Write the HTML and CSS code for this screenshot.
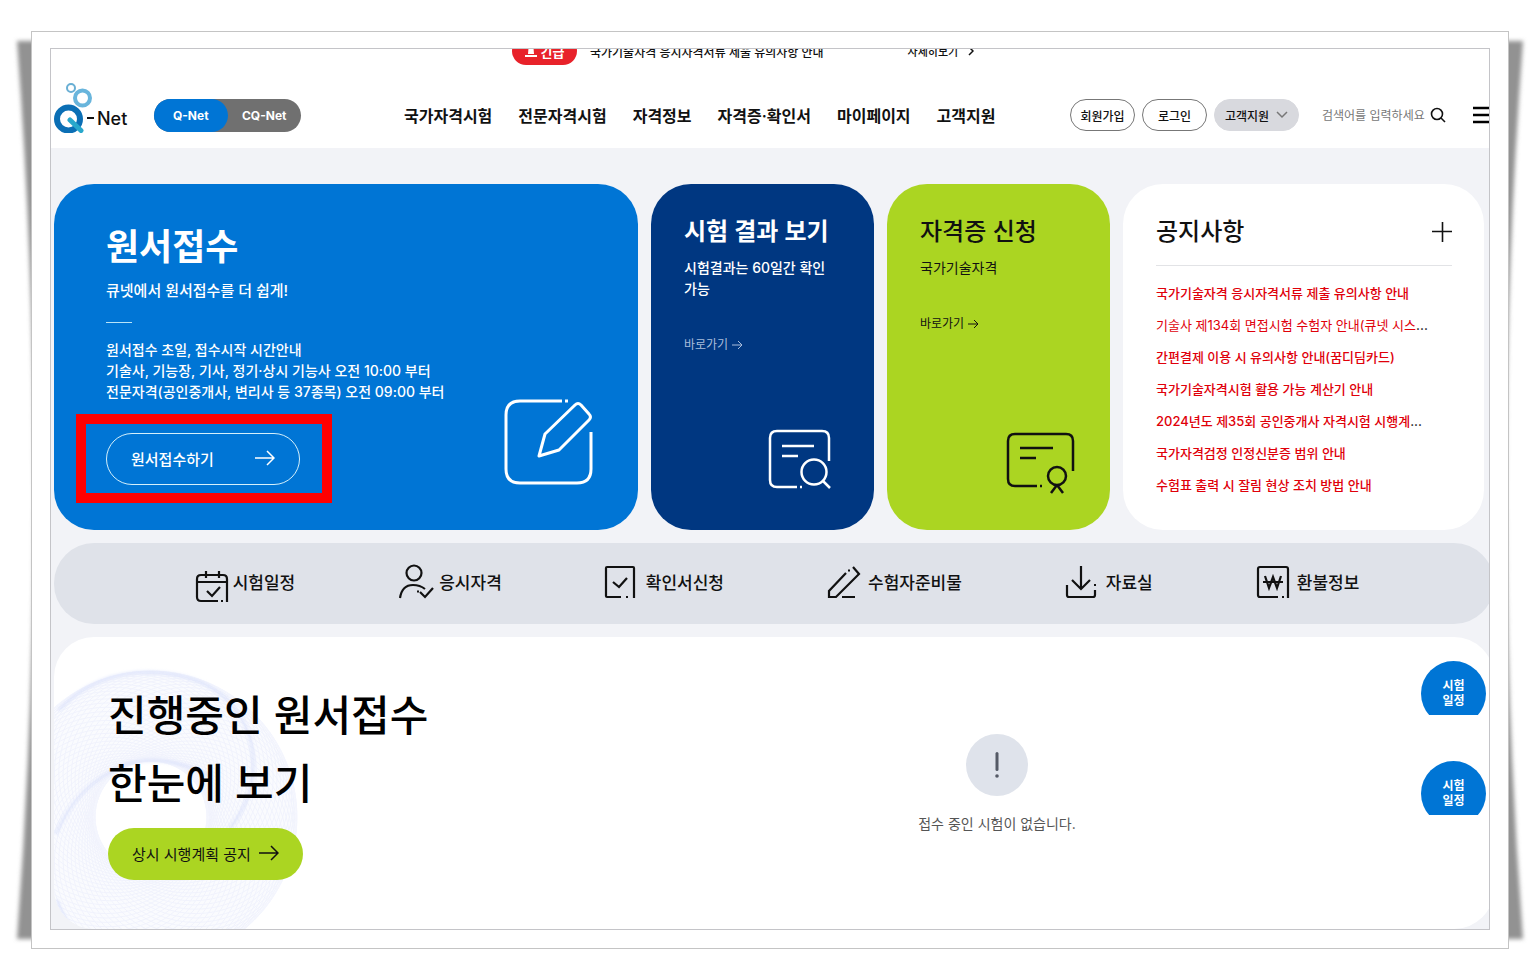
FILE: index.html
```html
<!DOCTYPE html>
<html lang="ko">
<head>
  <meta charset="UTF-8">
  <meta name="viewport" content="width=device-width, initial-scale=1.0">
  <title>Q-Net</title>
  <link rel="stylesheet" href="styles.css">
</head>
<body>
  <div class="paper">
    <!-- curled paper shadow -->
    <svg class="paper-shadow" viewBox="0 0 1540 980" preserveAspectRatio="none" aria-hidden="true">
      <defs><filter id="soft"><feGaussianBlur stdDeviation="2"/></filter></defs>
      <path d="M17 41 Q51 490 17 939 H1523 Q1489 490 1523 41 Z" fill="#929292" filter="url(#soft)"/>
    </svg>

    <div class="sheet">
      <div class="screen">
        <div class="page">
          <div class="alert-bar">
            <span class="alert-badge">
              <svg width="12" height="14" viewBox="0 0 12 14" fill="#fff"><path d="M3 10 L3.500 4 Q4 1 6 1 T8.500 4 L9 10 Z"/><rect x="0" y="11" width="12" height="2"/></svg>
              긴급
            </span>
            <span class="alert-text">국가기술자격 응시자격서류 제출 유의사항 안내</span>
            <a href="#" class="alert-more">자세히보기
              <svg width="6" height="10" viewBox="0 0 6 10" fill="none" stroke="#111" stroke-width="1.500"><path d="M1 1l4 4-4 4"/></svg>
            </a>
          </div>

          <header class="header">
            <a href="#" class="logo">
              <svg width="40" height="52" viewBox="0 0 40 52" fill="none">
                <circle cx="17" cy="7" r="4" stroke="#69afd4" stroke-width="2"/>
                <circle cx="28.500" cy="17" r="7.500" stroke="#69b5dc" stroke-width="4"/>
                <circle cx="14.500" cy="38" r="11.500" stroke="#0b6fb5" stroke-width="6"/>
                <path d="M16 39L27 49.500" stroke="#29a8cc" stroke-width="5" stroke-linecap="round"/>
                <rect x="33" y="36" width="7" height="2" fill="#111"/>
              </svg>
              <span>Net</span>
            </a>
            <div class="site-toggle">
              <button class="on">Q-Net</button>
              <button>CQ-Net</button>
            </div>
            <nav class="gnb">
              <a href="#">국가자격시험</a>
              <a href="#">전문자격시험</a>
              <a href="#">자격정보</a>
              <a href="#">자격증·확인서</a>
              <a href="#">마이페이지</a>
              <a href="#">고객지원</a>
            </nav>
            <div class="util">
              <button class="pill">회원가입</button>
              <button class="pill">로그인</button>
              <button class="pill gray">고객지원
                <svg width="12" height="8" viewBox="0 0 12 8" fill="none" stroke="#777" stroke-width="1.500"><path d="M1 1l5 5 5-5"/></svg>
              </button>
            </div>
            <form class="search">
              <input type="text" placeholder="검색어를 입력하세요" aria-label="검색어">
              <button type="button" aria-label="검색">
                <svg width="16" height="16" viewBox="0 0 16 16" fill="none" stroke="#111" stroke-width="1.600"><circle cx="7" cy="7" r="5.500"/><path d="M11 11l4 4"/></svg>
              </button>
            </form>
            <button class="menu-btn" aria-label="전체메뉴">
              <svg width="24" height="18" viewBox="0 0 24 18" fill="#000"><path d="M0 1h24v2H0zM0 8h24v2H0zM0 15h24v2H0z" stroke="#000" stroke-width="0.500"/></svg>
            </button>
          </header>

          <main class="main">
            <section class="cards">
              <article class="card apply">
                <div class="apply-text">
                  <h2>원서접수</h2>
                  <p class="lead">큐넷에서 원서접수를 더 쉽게!</p>
                  <p class="desc">원서접수 초일, 접수시작 시간안내<br>기술사, 기능장, 기사, 정기·상시 기능사 오전 10:00 부터<br>전문자격(공인중개사, 변리사 등 37종목) 오전 09:00 부터</p>
                  <a href="#" class="apply-btn">원서접수하기
                    <svg width="20" height="16" viewBox="0 0 20 16" fill="none" stroke="#fff" stroke-width="1.500"><path d="M0 8h19M12 1l7 7-7 7"/></svg>
                  </a>
                </div>
                <svg class="card-icon" width="90" height="88" viewBox="0 0 90 88" fill="none" stroke="#fff" stroke-width="3">
                  <path d="M58 2H16Q2 2 2 16V70Q2 84 16 84H73Q87 84 87 70V33"/>
                  <path d="M61 2h3"/>
                  <path d="M35 57L41 35L71 6Q74 3 77 6L85 15Q88 18 85 21L55 51Z" stroke-linejoin="round"/>
                </svg>
              </article>

              <article class="card result">
                <h3>시험 결과 보기</h3>
                <p>시험결과는 60일간 확인 가능</p>
                <a href="#" class="go">바로가기
                  <svg width="11" height="10" viewBox="0 0 11 10" fill="none" stroke="currentColor"><path d="M0 5h10M6 1l4 4-4 4"/></svg>
                </a>
                <svg class="card-icon" width="64" height="62" viewBox="0 0 64 62" fill="none" stroke="#fff" stroke-width="2.500">
                  <path d="M61 32V9Q61 2 54 2H9Q2 2 2 9V51Q2 58 9 58H29M32 58h2"/>
                  <path d="M14 17h32M14 27h16"/>
                  <circle cx="46" cy="43" r="12.500"/><path d="M55 52l7 7"/>
                </svg>
              </article>

              <article class="card license">
                <h3>자격증 신청</h3>
                <p>국가기술자격</p>
                <a href="#" class="go">바로가기
                  <svg width="11" height="10" viewBox="0 0 11 10" fill="none" stroke="currentColor"><path d="M0 5h10M6 1l4 4-4 4"/></svg>
                </a>
                <svg class="card-icon" width="70" height="62" viewBox="0 0 70 62" fill="none" stroke="#111" stroke-width="2.500">
                  <path d="M67 39V9Q67 2 60 2H9Q2 2 2 9V47Q2 54 9 54H31M34 54h2"/>
                  <path d="M14 16h33M14 26h16"/>
                  <circle cx="51" cy="44" r="9"/><path d="M51 53l-6 8M51 53l6 8"/>
                </svg>
              </article>

              <article class="card notice">
                <div class="notice-head">
                  <h3>공지사항</h3>
                  <button aria-label="더보기">
                    <svg width="20" height="20" viewBox="0 0 20 20" stroke="#111" stroke-width="1.600"><path d="M0 9.500h20M10.500 0v20"/></svg>
                  </button>
                </div>
                <ul>
                  <li><a href="#">국가기술자격 응시자격서류 제출 유의사항 안내</a></li>
                  <li><a href="#" class="thin">기술사 제134회 면접시험 수험자 안내(큐넷 시스</a>...</li>
                  <li><a href="#">간편결제 이용 시 유의사항 안내(꿈디딤카드)</a></li>
                  <li><a href="#">국가기술자격시험 활용 가능 계산기 안내</a></li>
                  <li><a href="#">2024년도 제35회 공인중개사 자격시험 시행계</a>...</li>
                  <li><a href="#">국가자격검정 인정신분증 범위 안내</a></li>
                  <li><a href="#">수험표 출력 시 잘림 현상 조치 방법 안내</a></li>
                </ul>
              </article>
            </section>

            <nav class="quick">
              <a href="#">
                <svg viewBox="0 0 32 40"><path d="M34 41V18Q34 14 30 14H8Q4 14 4 18V36Q4 40 8 40H25M28 40h2M4 21h30M13 10v7M26 10v7M14 30l5 5 8-9"/></svg>시험일정</a>
              <a href="#">
                <svg viewBox="0 0 32 40"><ellipse cx="15" cy="12" rx="7.500" ry="7.500"/><path d="M1 37Q3 24 14 24Q21 24 26 28M18 30.500h2M21 31l5 5 8-9"/></svg>응시자격</a>
              <a href="#">
                <svg viewBox="0 0 32 40"><path d="M28 37V7Q28 6 27 6H1Q0 6 0 7V35Q0 36 1 36H15M20 36h2M7 21l6 5 8-9"/></svg>확인서신청</a>
              <a href="#">
                <svg viewBox="0 0 32 40"><path d="M18 12L1 30V36H8L31 13L25 6M20 9.500h2M14 36h13"/></svg>수험자준비물</a>
              <a href="#">
                <svg viewBox="0 0 32 40"><path d="M15 5V27M6 19l9 9 9-9M1 24V34Q1 36 3 36H27Q29 36 29 34V29M28 24h2"/></svg>자료실</a>
              <a href="#">
                <svg viewBox="0 0 32 40"><path d="M31 37V8Q31 6 29 6H3Q1 6 1 8V34Q1 36 3 36H21M25 36h2M8 15l4 12 4-11 4 11 4-12M6 21h20"/></svg>환불정보</a>
            </nav>

            <section class="ongoing">
              <svg class="swirl" width="300" height="300" viewBox="0 0 300 300" fill="none" aria-hidden="true">
                <defs><filter id="haze"><feGaussianBlur stdDeviation="1.500"/></filter></defs>
                <circle cx="97" cy="151" r="101" stroke="#f5f7fe" stroke-width="86" opacity="0.500"/>
                <g id="rings"></g>
                <g stroke="#ccd6fa" stroke-width="3" opacity="0.500" filter="url(#haze)">
                  <path d="M5 44Q40 6 95 6Q175 8 196 72Q208 122 176 162"/>
                  <path d="M156 110Q110 86 70 99Q22 120 2 168"/>
                  <path d="M3 234Q8 252 22 266"/>
                </g>
              </svg>
              <div class="ongoing-left">
                <h2>진행중인 원서접수<br>한눈에 보기</h2>
                <a href="#" class="plan-btn">상시 시행계획 공지
                  <svg width="20" height="16" viewBox="0 0 20 16" fill="none" stroke="#111" stroke-width="1.500"><path d="M0 8h19M12 1l7 7-7 7"/></svg>
                </a>
              </div>
              <div class="empty">
                <span class="empty-icon">
                  <svg width="6" height="28" viewBox="0 0 6 28" fill="#555a66"><rect x="1.500" y="1" width="3" height="19" rx="1.500"/><circle cx="3" cy="25" r="1.800"/></svg>
                </span>
                <p>접수 중인 시험이 없습니다.</p>
              </div>
            </section>
          </main>
        </div>

        <aside class="floating">
          <div class="float-clip"><a href="#" class="float-btn">시험<br>일정</a></div>
          <div class="float-clip"><a href="#" class="float-btn">시험<br>일정</a></div>
        </aside>
      </div>
    </div>
  </div>

  <script>
    // fine line pattern behind the title: circles turned around one centre
    const rings = document.getElementById('rings');
    const ns = 'http://www.w3.org/2000/svg';
    const count = 64;

    for (let i = 0; i < count; i++) {
      const angle = (i / count) * Math.PI * 2;
      const c = document.createElementNS(ns, 'circle');
      c.setAttribute('cx', 97 + Math.cos(angle) * 45);
      c.setAttribute('cy', 151 + Math.sin(angle) * 45);
      c.setAttribute('r', 101);
      rings.appendChild(c);
    }
  </script>
</body>
</html>
```
FILE: styles.css
```css
* {
  box-sizing: border-box;
}

body {
  margin: 0;
  background-color: #fff;
  color: #111;
  font-family: Inter, "Noto Sans CJK KR", sans-serif;
  font-size: 14px;
  font-weight: 500;
  word-break: keep-all;
}

h2, h3, p, ul {
  margin: 0;
  padding: 0;
}

ul {
  list-style: none;
}

a {
  color: inherit;
  text-decoration: none;
}

button, input {
  font: inherit;
  color: inherit;
  border: none;
  background: none;
  padding: 0;
}

button {
  cursor: pointer;
}

svg {
  flex-shrink: 0;
}

/* paper frame */
.paper {
  position: relative;
  padding: 31px;
}

.paper-shadow {
  position: absolute;
  left: 0;
  top: 0;
  width: 100%;
  height: 100%;
}

.sheet {
  position: relative;
  background-color: #fff;
  border: 1px solid #c4c4c4;
  padding: 16px 18px 18px;
}

.screen {
  position: relative;
  overflow: hidden;
  border: 1px solid #c4c4c8;
  background-color: #f2f3f7;
}

/* the page runs a little past the right edge of the screen */
.page {
  width: calc(100% + 8px);
}

/* alert */
.alert-bar {
  display: flex;
  align-items: center;
  height: 34px;
  margin-top: -15px;
  padding-left: 461px;
  background-color: #fff;
  font-size: 12px;
}

.alert-badge {
  display: flex;
  align-items: center;
  justify-content: center;
  gap: 4px;
  width: 65px;
  height: 28px;
  border-radius: 14px;
  background-color: #e8222a;
  color: #fff;
  font-size: 13px;
  font-weight: 700;
}

.alert-text {
  margin: 0 84px 0 13px;
}

.alert-more {
  display: flex;
  align-items: center;
  gap: 10px;
  font-size: 11px;
}

/* header */
.header {
  display: flex;
  align-items: center;
  height: 80px;
  padding: 14px 3px 0;
  background-color: #fff;
}

.logo {
  display: flex;
  align-items: center;
  gap: 3px;
  width: 73px;
  height: 66px;
  font-size: 18px;
}

.logo svg {
  margin-bottom: 16px;
}

.logo span {
  margin-top: 6px;
}

.site-toggle {
  display: flex;
  width: 147px;
  height: 33px;
  margin-left: 27px;
  border-radius: 17px;
  background-color: #707070;
  color: #fff;
  font-size: 12px;
  font-weight: 700;
}

.site-toggle button {
  flex: 1;
}

.site-toggle .on {
  border-radius: 17px;
  background-color: #0075d5;
}

.gnb {
  display: flex;
  gap: 26px;
  margin-left: 103px;
  font-size: 16px;
  font-weight: 600;
  white-space: nowrap;
}

.util {
  display: flex;
  gap: 7px;
  margin-left: auto;
}

.pill {
  width: 65px;
  height: 32px;
  border: 1px solid #777;
  border-radius: 16px;
  font-size: 12px;
}

.pill.gray {
  display: flex;
  align-items: center;
  justify-content: center;
  gap: 7px;
  width: 85px;
  border-color: #d8d9de;
  background-color: #d8d9de;
}

.search {
  display: flex;
  align-items: center;
  margin-left: 23px;
}

.search input {
  width: 108px;
  font-size: 12px;
  font-weight: 400;
}

.search input::placeholder {
  color: #777;
  opacity: 1;
}

.search button,
.menu-btn {
  display: flex;
}

.menu-btn {
  width: 21px;
  margin-left: 27px;
}

/* main */
.main {
  display: flex;
  flex-direction: column;
  gap: 13px;
  padding: 36px 3px 0;
}

.cards {
  display: grid;
  grid-template-columns: 584fr 223fr 223fr 361fr;
  gap: 13px;
  padding-right: 10px;
}

.card {
  display: flex;
  flex-direction: column;
  min-height: 346px;
  padding: 30px 32px 34px 33px;
  border-radius: 40px;
}

.card h3 {
  font-size: 24px;
  font-weight: 500;
  line-height: 36px;
}

.card p {
  line-height: 21px;
}

.card-icon {
  align-self: flex-end;
  margin-top: auto;
}

.card.apply {
  flex-direction: row;
  justify-content: space-between;
  padding: 41px 44px 43px 52px;
  background-color: #0075d5;
  color: #fff;
}

.apply h2 {
  font-size: 36px;
  font-weight: 700;
  line-height: 44px;
}

.apply .lead {
  margin-top: 10px;
  font-size: 15px;
  line-height: 24px;
}

.apply .lead::after {
  content: "";
  display: block;
  width: 26px;
  height: 1px;
  margin: 19px 0 16px;
  background-color: #b9e4f8;
}

.apply .desc {
  white-space: nowrap;
}

.apply-btn {
  position: relative;
  display: flex;
  align-items: center;
  justify-content: space-between;
  width: 194px;
  height: 52px;
  margin-top: 31px;
  padding: 0 24px 2px;
  border: 1px solid #d5f0fb;
  border-radius: 26px;
  font-size: 15px;
}

/* red marker around the button */
.apply-btn::after {
  content: "";
  position: absolute;
  inset: -20px -33px -19px -31px;
  border: 10px solid #f00;
}

.result {
  background-color: #003781;
  color: #fff;
}

.result h3 {
  font-weight: 600;
}

.result .card-icon {
  margin-right: 10px;
  margin-bottom: 5px;
}

.license {
  background-color: #abd522;
}

.license .card-icon {
  margin-right: 2px;
  margin-bottom: 2px;
}

.card h3 + p {
  margin-top: 7px;
}

.go {
  display: flex;
  align-items: center;
  gap: 4px;
  margin-top: 37px;
  font-size: 12px;
  font-weight: 400;
  line-height: 18px;
}

.result .go {
  color: #a9bddb;
}

.license p {
  font-weight: 400;
}

.card.notice {
  padding-bottom: 24px;
  background-color: #fff;
}

.notice-head {
  display: flex;
  align-items: center;
  justify-content: space-between;
  padding-bottom: 15px;
  border-bottom: 1px solid #e2e3e6;
}

.notice-head button {
  display: flex;
}

.notice ul {
  margin-top: 11px;
}

.notice li {
  font-size: 13px;
  line-height: 32px;
  white-space: nowrap;
}

.notice li a {
  color: #e0000a;
}

.notice li .thin {
  font-weight: 400;
}

/* quick menu */
.quick {
  display: flex;
  align-items: center;
  justify-content: center;
  gap: 104px;
  height: 81px;
  padding: 0 0 5px 4px;
  border-radius: 40px;
  background-color: #dfe2e9;
  font-size: 17px;
  white-space: nowrap;
}

.quick a {
  display: flex;
  align-items: center;
  gap: 8px;
}

.quick svg {
  width: 32px;
  height: 40px;
  overflow: visible;
  fill: none;
  stroke: #111;
  stroke-width: 2.2;
}

/* ongoing */
.ongoing {
  position: relative;
  display: grid;
  grid-template-columns: 446fr 994fr;
  overflow: hidden;
  border-radius: 40px;
  background-color: #fff;
}

.swirl {
  position: absolute;
  left: 0;
  top: 29px;
}

#rings {
  stroke: #e3e7fb;
  stroke-width: 1;
  opacity: 0.4;
}

.ongoing-left {
  position: relative;
  padding: 45px 0 49px 54px;
}

.ongoing h2 {
  color: #000;
  font-size: 42px;
  font-weight: 500;
  line-height: 68px;
  white-space: nowrap;
}

.plan-btn {
  display: flex;
  align-items: center;
  justify-content: space-between;
  width: 195px;
  height: 52px;
  margin-top: 10px;
  padding: 0 24px 2px;
  border-radius: 26px;
  background-color: #abd522;
  font-size: 15px;
  font-weight: 400;
}

.empty {
  display: flex;
  flex-direction: column;
  align-items: center;
  justify-content: center;
  gap: 16px;
  padding-top: 4px;
  color: #555;
  font-weight: 400;
  line-height: 24px;
}

.empty-icon {
  display: flex;
  align-items: center;
  justify-content: center;
  width: 62px;
  height: 62px;
  border-radius: 50%;
  background-color: #dfe3eb;
}

/* floating buttons, cut off at the bottom */
.floating {
  position: absolute;
  right: 3px;
  top: 612px;
  display: flex;
  flex-direction: column;
  gap: 46px;
}

.float-clip {
  height: 54px;
  overflow: hidden;
}

.float-btn {
  display: block;
  width: 65px;
  height: 65px;
  padding-top: 17px;
  border-radius: 50%;
  background-color: #0075d5;
  color: #fff;
  font-size: 12px;
  font-weight: 700;
  line-height: 15px;
  text-align: center;
}
```
